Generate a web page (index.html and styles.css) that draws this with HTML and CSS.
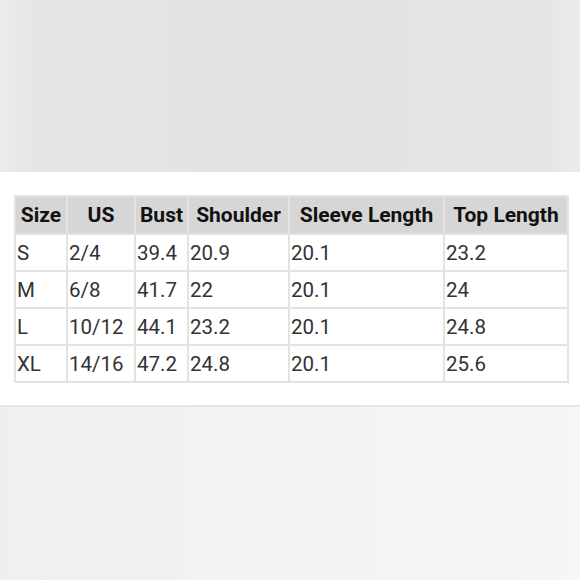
FILE: index.html
```html
<!DOCTYPE html>
<html>
<head>
<meta charset="utf-8">
<link rel="stylesheet" href="styles.css">
</head>
<body>
<div class="page">
  <div class="band-top"></div>
  <div class="middle">
    <table class="sizes">
      <colgroup>
        <col class="c1"><col class="c2"><col class="c3"><col class="c4"><col class="c5"><col class="c6">
      </colgroup>
      <thead>
        <tr><th>Size</th><th>US</th><th>Bust</th><th>Shoulder</th><th>Sleeve Length</th><th>Top Length</th></tr>
      </thead>
      <tbody>
        <tr><td>S</td><td>2/4</td><td>39.4</td><td>20.9</td><td>20.1</td><td>23.2</td></tr>
        <tr><td>M</td><td>6/8</td><td>41.7</td><td>22</td><td>20.1</td><td>24</td></tr>
        <tr><td>L</td><td>10/12</td><td>44.1</td><td>23.2</td><td>20.1</td><td>24.8</td></tr>
        <tr><td>XL</td><td>14/16</td><td>47.2</td><td>24.8</td><td>20.1</td><td>25.6</td></tr>
      </tbody>
    </table>
  </div>
  <div class="band-bottom"></div>
</div>
</body>
</html>
```

FILE: styles.css
```css
html, body {
  margin: 0;
  padding: 0;
  background: #ffffff;
}

.page {
  width: 580px;
  height: 580px;
  display: flex;
  flex-direction: column;
  overflow: hidden;
}

.band-top {
  height: 172px;
  flex: none;
  background: linear-gradient(to right, #ececec 0%, #e4e5e5 6%, #e2e3e3 50%, #e4e5e5 94%, #ebecec 100%);
}

.middle {
  height: 235px;
  flex: none;
  background: #ffffff;
  padding: 23px 0 0 14px;
  box-sizing: border-box;
  border-bottom: 2px solid #e6e7e7;
}

.band-bottom {
  flex: 1;
  background: linear-gradient(to right, #eeefef 0%, #f1f2f2 40%, #f5f6f6 100%);
}

.sizes {
  border-collapse: collapse;
  table-layout: fixed;
  width: 553px;
  font-family: Roboto, "Liberation Sans", sans-serif;
}

.c1 { width: 52px; }
.c2 { width: 68px; }
.c3 { width: 53px; }
.c4 { width: 101px; }
.c5 { width: 155px; }
.c6 { width: 124px; }

.sizes th,
.sizes td {
  border: 2px solid #e3e3e3;
  padding: 0 1px;
  box-sizing: border-box;
  white-space: nowrap;
  overflow: hidden;
}

.sizes th {
  background: #d6d6d6;
  color: #111111;
  font-weight: bold;
  font-size: 21px;
  text-align: center;
  height: 38px;
}

.sizes td {
  color: #333333;
  font-size: 20.5px;
  font-weight: normal;
  text-align: left;
  height: 37px;
  padding-top: 1px;
}
```
